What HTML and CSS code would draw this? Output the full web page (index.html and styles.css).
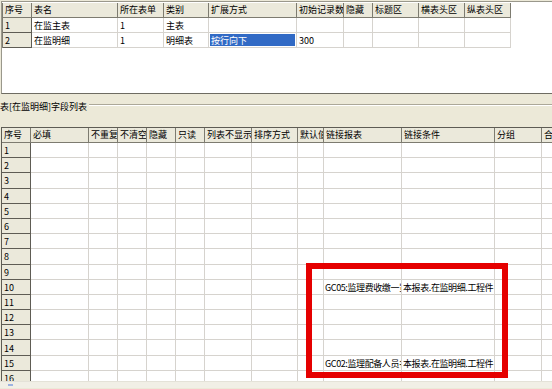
FILE: index.html
```html
<!DOCTYPE html>
<html lang="zh-CN">
<head>
    <meta charset="UTF-8">
    <title>表单字段设置</title>
    <link rel="stylesheet" href="styles.css">
</head>
<body>

    <!-- 表列表 -->
    <div class="top-panel">
        <table class="grid top-grid">
            <colgroup>
                <col><col><col><col><col><col><col><col><col><col>
            </colgroup>
            <thead>
                <tr>
                    <th>序号</th><th>表名</th><th>所在表单</th><th>类别</th><th>扩展方式</th>
                    <th>初始记录数</th><th>隐藏</th><th>标题区</th><th>横表头区</th><th>纵表头区</th>
                </tr>
            </thead>
            <tbody>
                <tr>
                    <td class="num">1</td><td>在监主表</td><td>1</td><td>主表</td><td></td>
                    <td></td><td></td><td></td><td></td><td></td>
                </tr>
                <tr>
                    <td class="num">2</td><td>在监明细</td><td>1</td><td>明细表</td><td class="selected">按行向下</td>
                    <td>300</td><td></td><td></td><td></td><td></td>
                </tr>
            </tbody>
        </table>
    </div>

    <!-- 字段列表 -->
    <div class="bottom-panel">
        <div class="caption"><span>表[在监明细]字段列表</span></div>
        <div class="grid-wrap">
            <table class="grid field-grid">
                <colgroup>
                    <col><col><col><col><col><col><col><col><col><col><col><col><col>
                </colgroup>
                <thead>
                    <tr>
                        <th>序号</th><th>必填</th><th>不重复</th><th>不清空</th><th>隐藏</th><th>只读</th>
                        <th>列表不显示</th><th>排序方式</th><th>默认值</th><th>链接报表</th><th>链接条件</th>
                        <th>分组</th><th>合计</th>
                    </tr>
                </thead>
                <tbody>
                    <tr><td class="num">1</td><td></td><td></td><td></td><td></td><td></td><td></td><td></td><td></td><td></td><td></td><td></td><td></td></tr>
                    <tr><td class="num">2</td><td></td><td></td><td></td><td></td><td></td><td></td><td></td><td></td><td></td><td></td><td></td><td></td></tr>
                    <tr><td class="num">3</td><td></td><td></td><td></td><td></td><td></td><td></td><td></td><td></td><td></td><td></td><td></td><td></td></tr>
                    <tr><td class="num">4</td><td></td><td></td><td></td><td></td><td></td><td></td><td></td><td></td><td></td><td></td><td></td><td></td></tr>
                    <tr><td class="num">5</td><td></td><td></td><td></td><td></td><td></td><td></td><td></td><td></td><td></td><td></td><td></td><td></td></tr>
                    <tr><td class="num">6</td><td></td><td></td><td></td><td></td><td></td><td></td><td></td><td></td><td></td><td></td><td></td><td></td></tr>
                    <tr><td class="num">7</td><td></td><td></td><td></td><td></td><td></td><td></td><td></td><td></td><td></td><td></td><td></td><td></td></tr>
                    <tr><td class="num">8</td><td></td><td></td><td></td><td></td><td></td><td></td><td></td><td></td><td></td><td></td><td></td><td></td></tr>
                    <tr><td class="num">9</td><td></td><td></td><td></td><td></td><td></td><td></td><td></td><td></td><td></td><td></td><td></td><td></td></tr>
                    <tr><td class="num">10</td><td></td><td></td><td></td><td></td><td></td><td></td><td></td><td></td><td class="link">GC05:监理费收缴一览表</td><td class="link">本报表.在监明细.工程件</td><td></td><td></td></tr>
                    <tr><td class="num">11</td><td></td><td></td><td></td><td></td><td></td><td></td><td></td><td></td><td></td><td></td><td></td><td></td></tr>
                    <tr><td class="num">12</td><td></td><td></td><td></td><td></td><td></td><td></td><td></td><td></td><td></td><td></td><td></td><td></td></tr>
                    <tr><td class="num">13</td><td></td><td></td><td></td><td></td><td></td><td></td><td></td><td></td><td></td><td></td><td></td><td></td></tr>
                    <tr><td class="num">14</td><td></td><td></td><td></td><td></td><td></td><td></td><td></td><td></td><td></td><td></td><td></td><td></td></tr>
                    <tr><td class="num">15</td><td></td><td></td><td></td><td></td><td></td><td></td><td></td><td></td><td class="link">GC02:监理配备人员名单</td><td class="link">本报表.在监明细.工程件</td><td></td><td></td></tr>
                    <tr><td class="num">16</td><td></td><td></td><td></td><td></td><td></td><td></td><td></td><td></td><td></td><td></td><td></td><td></td></tr>
                </tbody>
            </table>
        </div>
        <div class="hscroll"><span class="hscroll-mark"></span></div>
    </div>

    <!-- 红框标注 -->
    <div class="highlight"></div>

</body>
</html>
```

FILE: styles.css
```css
/* General styling */
body {
    margin: 0;
    width: 552px;
    height: 389px;
    overflow: hidden;
    position: relative;
    background: #ece9d8;
    font-family: "Noto Sans CJK SC", "Liberation Sans", sans-serif;
    font-size: 9px;
    color: #000;
}

/* Grid base */
.grid {
    table-layout: fixed;
    border-collapse: separate;
    border-spacing: 0;
}

.grid col {
    width: 46px;
}

.grid th,
.grid td {
    box-sizing: border-box;
    padding: 0 0 0 2px;
    font-weight: normal;
    text-align: left;
    white-space: nowrap;
    overflow: hidden;
    text-overflow: clip;
    line-height: 14px;
}

.grid th {
    height: 15px;
    background: #ebe9db;
    border-right: 1px solid #7d7b70;
    border-bottom: 1px solid #7d7b70;
}

.grid td {
    height: 15px;
    padding-top: 1px;
    line-height: 13px;
    background: #fff;
    border-right: 1px solid #d6d3ce;
    border-bottom: 1px solid #d6d3ce;
}

.grid td.num {
    background: #ebe9db;
    border-right: 1px solid #5e5c54;
    border-bottom: 1px solid #5e5c54;
}

/* Top table list */
.top-panel {
    height: 90px;
    margin: 1px 0 0 1px;
    padding: 1px 0 0 0;
    background: #fff;
    border-top: 1px solid #9a988c;
    border-left: 1px solid #9a988c;
    border-bottom: 1px solid #6e6c62;
}

.top-grid {
    width: 509px;
    border-left: 1px solid #7d7b70;
}

.top-grid col:nth-child(1) { width: 29px; }
.top-grid col:nth-child(2) { width: 86px; }
.top-grid col:nth-child(3) { width: 46px; }
.top-grid col:nth-child(4) { width: 45px; }
.top-grid col:nth-child(5) { width: 88px; }
.top-grid col:nth-child(6) { width: 47px; }
.top-grid col:nth-child(7) { width: 29px; }
.top-grid col:nth-child(8) { width: 46px; }
.top-grid col:nth-child(9) { width: 46px; }
.top-grid col:nth-child(10) { width: 46px; }

.top-grid td.selected {
    background: #316ac5;
    color: #fff;
    box-shadow: inset 0 0 0 1px #fff;
}

/* Field list */
.bottom-panel {
    height: 294px;
    display: flex;
    flex-direction: column;
}

.caption {
    display: flex;
    align-items: center;
    height: 22px;
    margin-top: 1px;
}

.caption span {
    padding-top: 1px;
}

.caption::after {
    content: "";
    flex: 1;
    height: 0;
    margin: 0 0 2px 2px;
    border-top: 1px solid #aca899;
    border-bottom: 1px solid #fff;
}

.grid-wrap {
    flex: 1;
    margin: 10px 0 0 1px;
    overflow: hidden;
    border-top: 1px solid #5e5c54;
    border-left: 1px solid #5e5c54;
    background: #fff;
}

.field-grid {
    width: 600px;
}

.field-grid col:nth-child(1) { width: 29px; }
.field-grid col:nth-child(2) { width: 58px; }
.field-grid col:nth-child(3) { width: 29px; }
.field-grid col:nth-child(4) { width: 29px; }
.field-grid col:nth-child(5) { width: 29px; }
.field-grid col:nth-child(6) { width: 29px; }
.field-grid col:nth-child(7) { width: 47px; }
.field-grid col:nth-child(8) { width: 46px; }
.field-grid col:nth-child(9) { width: 26px; }
.field-grid col:nth-child(10) { width: 78px; }
.field-grid col:nth-child(11) { width: 93px; }
.field-grid col:nth-child(12) { width: 47px; }
.field-grid col:nth-child(13) { width: 60px; }

.field-grid tbody td {
    height: 15.2px;
    padding-top: 2px;
    line-height: 12px;
}

.field-grid td.link {
    padding-left: 1px;
    letter-spacing: -0.4px;
}

/* Horizontal scrollbar strip */
.hscroll {
    height: 6px;
    background: #f1efe6;
    border-top: 1px solid #e4e2d8;
    padding-left: 8px;
}

.hscroll-mark {
    display: block;
    width: 5px;
    height: 2px;
    margin-top: 2px;
    background: #9db3e0;
}

/* Red annotation box */
.highlight {
    position: absolute;
    left: 306px;
    top: 263px;
    width: 202px;
    height: 115px;
    box-sizing: border-box;
    border: 6px solid #e50000;
}
```
